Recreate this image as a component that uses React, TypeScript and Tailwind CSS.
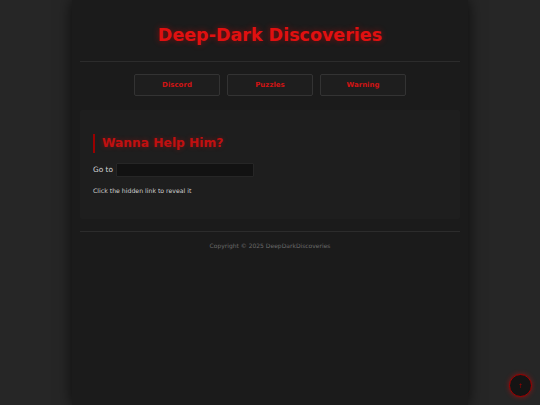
import React from "react";

const font = { fontFamily: '"DejaVu Sans", Verdana, sans-serif' };

export default function App() {
  const links = ["Discord", "Puzzles", "Warning"];
  return (
    <div className="min-h-screen bg-[#262626]" style={font}>
      <div className="w-[396px] mx-auto min-h-[405px] bg-[#1b1b1b] px-2 shadow-[0_0_14px_rgba(0,0,0,0.7)]">
        <header className="pt-[25px] pb-[16px] border-b border-[#2c2c2c] text-center">
          <h1 className="h-[20px] leading-[20px] text-[17.5px] font-bold text-[#e01010] [text-shadow:0_0_6px_rgba(255,0,0,0.45)]">
            Deep-Dark Discoveries
          </h1>
        </header>
        <nav className="mt-[12px] flex justify-center gap-[7px]">
          {links.map((l) => (
            <a
              key={l}
              className="w-[86px] h-[22px] flex items-center justify-center rounded-[2px] border border-[#333333] bg-[#1e1e1e] text-[7px] font-bold text-[#d01414]"
            >
              {l}
            </a>
          ))}
        </nav>
        <section className="mt-[14px] h-[109px] rounded-[2px] bg-[#1e1e1e] pl-[13px] pt-[24px]">
          <h2 className="h-[19px] leading-[19px] border-l-2 border-[#9a0000] pl-[7px] text-[12.25px] font-bold text-[#c01010] [text-shadow:0_0_5px_rgba(255,0,0,0.35)]">
            Wanna Help Him?
          </h2>
          <div className="mt-[10px] h-[14px] flex items-center gap-[3px]">
            <span className="text-[7.4px] text-[#d8d8d8] leading-[14px]">Go to</span>
            <div className="w-[138px] h-[14px] bg-[#121212] border border-[#262626] rounded-[1px]" />
          </div>
          <p className="mt-[11px] h-[6px] leading-[6px] text-[6.2px] text-[#cfcfcf]">
            Click the hidden link to reveal it
          </p>
        </section>
        <footer className="mt-[12px] border-t border-[#2c2c2c] pt-[10px] text-center">
          <p className="leading-[7px] text-[6px] text-[#6a6a6a]">
            Copyright © 2025 DeepDarkDiscoveries
          </p>
        </footer>
      </div>
      <button className="fixed right-[8px] bottom-[8px] w-[23px] h-[23px] rounded-full border border-[#a00000] bg-[#141414] shadow-[0_0_5px_rgba(255,0,0,0.45)] flex items-center justify-center text-[6px] leading-none text-[#a00000]">
        ↑
      </button>
    </div>
  );
}
